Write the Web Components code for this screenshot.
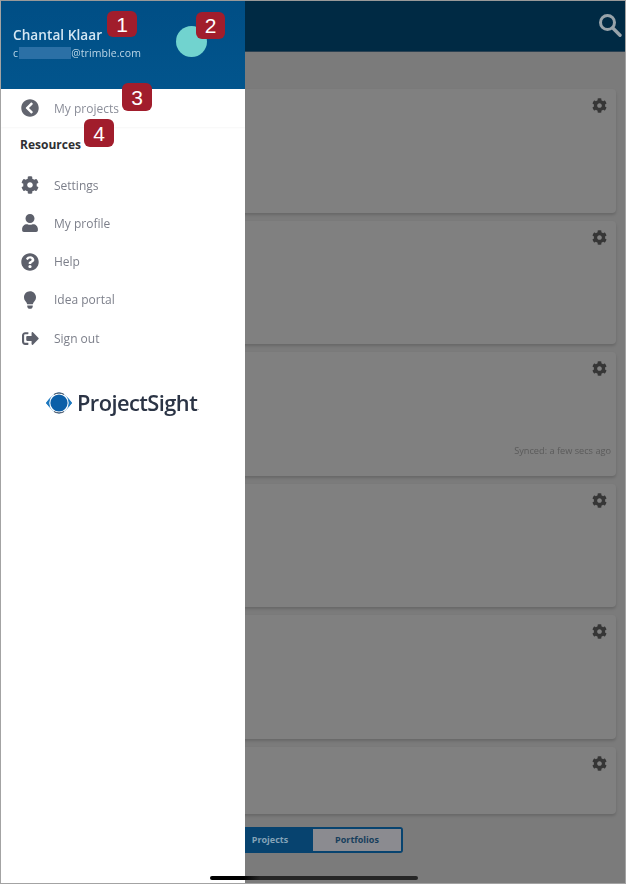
<!DOCTYPE html>
<html lang="en"><head><meta charset="utf-8"><title>ProjectSight menu</title>
<style>
html,body{margin:0;padding:0;background:#7b7b7b}
body{font-family:"Open Sans","Liberation Sans",sans-serif}
</style></head><body>
<app-shell>
  <top-bar slot="page"></top-bar>
  <project-list slot="page">
    <project-card></project-card>
    <project-card></project-card>
    <project-card synced="Synced: a few secs ago"></project-card>
    <project-card></project-card>
    <project-card></project-card>
    <project-card short></project-card>
  </project-list>
  <segment-toggle slot="page"></segment-toggle>

  <nav-drawer slot="overlay">
    <drawer-header name="Chantal Klaar" prefix="c" domain="@trimble.com"></drawer-header>
    <back-row label="My projects"></back-row>
    <section-title>Resources</section-title>
    <nav-item icon="cog">Settings</nav-item>
    <nav-item icon="user">My profile</nav-item>
    <nav-item icon="help">Help</nav-item>
    <nav-item icon="bulb">Idea portal</nav-item>
    <nav-item icon="signout">Sign out</nav-item>
    <brand-logo></brand-logo>
  </nav-drawer>

  <note-badge slot="overlay" n="1" style="left:106px;top:10px;width:30px;height:26px"></note-badge>
  <note-badge slot="overlay" n="2" style="left:195px;top:11px;width:29px;height:27px"></note-badge>
  <note-badge slot="overlay" n="3" style="left:121px;top:82px;width:30px;height:28px"></note-badge>
  <note-badge slot="overlay" n="4" style="left:83px;top:118px;width:30px;height:28px"></note-badge>
  <home-indicator slot="overlay"></home-indicator>
</app-shell>

<script>
const ICONS={
cog:['0 0 512 512','M487.4 315.7l-42.6-24.6c4.3-23.2 4.3-47 0-70.2l42.6-24.6c4.9-2.8 7.1-8.6 5.5-14-11.1-35.6-30-67.8-54.7-94.6-3.8-4.1-10-5.1-14.8-2.3L380.8 110c-17.9-15.4-38.5-27.3-60.8-35.1V25.8c0-5.6-3.9-10.5-9.4-11.7-36.7-8.2-74.3-7.8-109.2 0-5.5 1.2-9.4 6.1-9.4 11.7V75c-22.2 7.9-42.8 19.8-60.8 35.1L88.7 85.5c-4.9-2.8-11-1.9-14.8 2.3-24.7 26.7-43.6 58.9-54.7 94.6-1.7 5.4.6 11.2 5.5 14L67.3 221c-4.3 23.2-4.3 47 0 70.2l-42.6 24.6c-4.9 2.8-7.1 8.6-5.5 14 11.1 35.6 30 67.8 54.7 94.6 3.8 4.1 10 5.1 14.8 2.3l42.6-24.6c17.9 15.4 38.5 27.3 60.8 35.1v49.2c0 5.6 3.9 10.5 9.4 11.7 36.7 8.2 74.3 7.8 109.2 0 5.5-1.2 9.4-6.1 9.4-11.7v-49.2c22.2-7.9 42.8-19.8 60.8-35.1l42.6 24.6c4.9 2.8 11 1.9 14.8-2.3 24.7-26.7 43.6-58.9 54.7-94.6 1.5-5.5-.7-11.3-5.6-14.1zM256 336c-44.1 0-80-35.9-80-80s35.9-80 80-80 80 35.9 80 80-35.9 80-80 80z'],
user:['0 0 448 512','M224 256c70.7 0 128-57.3 128-128S294.7 0 224 0 96 57.3 96 128s57.3 128 128 128zm89.6 32h-16.7c-22.2 10.2-46.9 16-72.9 16s-50.6-5.8-72.9-16h-16.7C60.2 288 0 348.2 0 422.4V464c0 26.5 21.5 48 48 48h352c26.5 0 48-21.5 48-48v-41.6c0-74.2-60.2-134.4-134.4-134.4z'],
help:['0 0 512 512','M504 256c0 136.997-111.043 248-248 248S8 392.997 8 256C8 119.083 119.043 8 256 8s248 111.083 248 248zM262.655 90c-54.497 0-89.255 22.957-116.549 63.758-3.536 5.286-2.353 12.415 2.715 16.258l34.699 26.31c5.205 3.947 12.621 3.008 16.665-2.122 17.864-22.658 30.113-35.797 57.303-35.797 20.429 0 45.698 13.148 45.698 32.958 0 14.976-12.363 22.667-32.534 33.976C247.128 238.528 216 254.941 216 296v4c0 6.627 5.373 12 12 12h56c6.627 0 12-5.373 12-12v-1.333c0-28.462 83.186-29.647 83.186-106.667 0-58.002-60.165-102-116.531-102zM256 338c-25.365 0-46 20.635-46 46 0 25.364 20.635 46 46 46s46-20.636 46-46c0-25.365-20.635-46-46-46z'],
back:['0 0 512 512','M256 504C119 504 8 393 8 256S119 8 256 8s248 111 248 248-111 248-248 248zM142.1 273l135.5 135.5c9.4 9.4 24.6 9.4 33.9 0l17-17c9.4-9.4 9.4-24.6 0-33.9L226.9 256l101.6-101.6c9.4-9.4 9.4-24.6 0-33.9l-17-17c-9.4-9.4-24.6-9.4-33.9 0L142.1 239c-9.4 9.4-9.4 24.6 0 34z'],
bulb:['0 0 352 512','M96.06 454.35c.01 6.29 1.87 12.45 5.36 17.69l17.09 25.69a31.99 31.99 0 0 0 26.64 14.28h61.71a31.99 31.99 0 0 0 26.64-14.28l17.09-25.69a31.989 31.989 0 0 0 5.36-17.69l.04-38.35H96.01l.05 38.35zM0 176c0 44.37 16.45 84.85 43.56 115.78 16.52 18.85 42.36 58.23 52.21 91.45.04.26.07.52.11.78h160.24c.04-.26.07-.51.11-.78 9.85-33.22 35.69-72.6 52.21-91.45C335.55 260.85 352 220.37 352 176 352 78.61 272.91-.3 175.45 0 73.44.31 0 82.97 0 176z'],
signout:['0 0 512 512','M497 273L329 441c-15 15-41 4.5-41-17v-96H152c-13.3 0-24-10.7-24-24v-96c0-13.3 10.7-24 24-24h136V88c0-21.4 25.9-32 41-17l168 168c9.3 9.4 9.3 24.6 0 34zM192 436v-40c0-6.6-5.4-12-12-12H96c-17.7 0-32-14.3-32-32V160c0-17.7 14.3-32 32-32h84c6.6 0 12-5.4 12-12V76c0-6.6-5.4-12-12-12H96c-53 0-96 43-96 96v192c0 53 43 96 96 96h84c6.6 0 12-5.4 12-12z']
};
function def(name,css,html){
  customElements.define(name,class extends HTMLElement{
    constructor(){super();this.attachShadow({mode:'open'});}
    connectedCallback(){
      if(this._r)return;this._r=1;
      const h=typeof html==='function'?html(this):html;
      this.shadowRoot.innerHTML='<style>'+css+'</style>'+h;
    }
  });
}
def('fa-icon',':host{display:inline-flex;align-items:center;justify-content:center;color:inherit}svg{display:block;fill:currentColor;width:var(--w,18px);height:var(--h,18px)}',
  e=>{const i=ICONS[e.getAttribute('name')];return `<svg viewBox="${i[0]}"><path d="${i[1]}"/></svg>`;});

def('app-shell',`:host{display:block;position:relative;width:626px;height:884px;box-sizing:border-box;border:1px solid #a3a3a3;border-top-color:#999;background:#7b7b7b;overflow:hidden}
 .page{display:flex;flex-direction:column;height:100%;filter:blur(.3px)}`,
 `<div class="page"><slot name="page"></slot></div><slot name="overlay"></slot>`);

def('top-bar',`:host{display:flex;align-items:center;justify-content:flex-end;height:51px;flex:none;background:#002a44;border-bottom:1px solid #2b4152;box-sizing:border-box;padding-right:3px}
 svg{display:block;width:24px;height:26px;fill:none;stroke:#98a3aa;stroke-width:3;margin-top:-3px}`,
 `<svg viewBox="0 0 24 26"><circle cx="9.5" cy="10.5" r="7"/><path d="M14.8 16 22 23.2" stroke-linecap="round" stroke-width="3.4"/></svg>`);

def('project-list',`:host{display:flex;flex-direction:column;gap:8px;padding:37px 9px 0 0}`,`<slot></slot>`);

def('project-card',`:host{display:flex;flex-direction:column;justify-content:space-between;height:123.6px;box-sizing:border-box;background:#808080;border-radius:0 4px 4px 0;box-shadow:0 2px 3px rgba(0,0,0,.16);padding:9px 5px 19px 0;color:#3a3a3a}
 :host([short]){height:67px}
 fa-icon{align-self:flex-end;--w:15px;--h:15px;margin-right:4px;color:#363636}
 .s{align-self:flex-end;font-size:9.2px;line-height:12px;color:#5a5a5a;white-space:nowrap}`,
 e=>`<fa-icon name="cog"></fa-icon>${e.hasAttribute('synced')?`<span class="s">${e.getAttribute('synced')}</span>`:''}`);

def('segment-toggle',`:host{display:flex;align-self:center;margin:13px 0 0;height:26px;box-sizing:border-box;border:2px solid #07436f;border-radius:3px;font-size:9px;font-weight:700;line-height:22px;text-align:center}
 span{width:88px;display:block}
 .on{background:#07436f;color:#85a3b8;text-indent:2px}
 .off{background:#8b8b90;color:#173e5c}`,
 `<span class="on">Projects</span><span class="off">Portfolios</span>`);

def('nav-drawer',`:host{position:absolute;left:0;top:0;bottom:0;width:244px;background:#fff;display:flex;flex-direction:column;color:#6a6e7c}`,`<slot></slot>`);

def('drawer-header',`:host{display:flex;align-items:flex-start;justify-content:space-between;height:88px;flex:none;box-sizing:border-box;background:linear-gradient(#004e85,#02558d);padding:26px 37px 0 12px;color:#d3e6f2}
 .n{font-size:13.6px;line-height:16px;font-weight:600;letter-spacing:.05px;filter:blur(.25px)}
 .m{display:flex;font-size:10.5px;line-height:14px;margin-top:3px;color:#bcd6e7;letter-spacing:.1px;filter:blur(.25px)}
 .r{width:52px;height:12px;margin:1px 0 0 1px;background:#2b70a6}
 .a{width:31px;height:31px;border-radius:50%;background:#71d3cf;margin-top:-1px;margin-right:1px}`,
 e=>`<div><div class="n">${e.getAttribute('name')}</div><div class="m"><span>${e.getAttribute('prefix')}</span><span class="r"></span><span>${e.getAttribute('domain')}</span></div></div><div class="a"></div>`);

def('back-row',`:host{display:flex;align-items:center;height:38px;flex:none;box-sizing:border-box;padding-left:20px;font-size:12px;color:#8b8e99;box-shadow:0 1px 2px rgba(0,0,0,.035)}
 fa-icon{--w:18px;--h:18px;color:#62656f;width:18px;margin-right:15px}
 span{filter:blur(.3px)}`,
 e=>`<fa-icon name="back"></fa-icon><span>${e.getAttribute('label')}</span>`);

def('section-title',`:host{display:block;height:39px;flex:none;box-sizing:border-box;padding:9px 0 0 19px;font-size:12px;line-height:17px;font-weight:700;color:#2f2f33}`,`<slot></slot>`);

def('nav-item',`:host{display:flex;align-items:center;height:38.25px;flex:none;padding-left:20px;font-size:12px;color:#7c7f8a}
 .i{width:18px;display:flex;justify-content:center;margin-right:15px;color:#5d606b}
 .l{filter:blur(.3px)}
 fa-icon{--w:18px;--h:18px}
 fa-icon.user{--w:16px;--h:18px}
 fa-icon.bulb{--w:12px;--h:18px}
 fa-icon.signout{--w:17px;--h:17px}`,
 e=>{const n=e.getAttribute('icon');return `<span class="i"><fa-icon class="${n}" name="${n}"></fa-icon></span><span class="l"><slot></slot></span>`;});

def('brand-logo',`:host{display:flex;align-items:center;justify-content:flex-start;flex:none;margin:30px 0 0 45px;height:32px;color:#2b3445;filter:blur(.25px)}
 svg{display:block;width:26px;height:22px;margin-right:5px;flex:none}
 .t{font-family:"Open Sans","Liberation Sans",sans-serif;font-size:21.8px;font-weight:600;letter-spacing:-.55px;line-height:32px;white-space:nowrap}
 .d{font-size:8px;color:#8f96a3;align-self:flex-end;line-height:24px}`,
 `<svg viewBox="0 0 26 22"><path d="M0 11C3 7 8 .6 13 .6S23 7 26 11C23 15 18 21.4 13 21.4S3 15 0 11Z" fill="#1c78bf"/><circle cx="13" cy="11" r="10" fill="#fff"/><path d="M0 11 5.2 5.4C2.6 8.5 2.6 13.5 5.2 16.6ZM26 11 20.8 5.4C23.4 8.5 23.4 13.5 20.8 16.6Z" fill="#1c78bf"/><path d="M8 2.4C11 .6 15 .6 18 2.4M8 19.6C11 21.4 15 21.4 18 19.6" fill="none" stroke="#2b3445" stroke-width=".9"/><circle cx="13" cy="11" r="8.6" fill="#0b5fa8"/></svg><span class="t">ProjectSight</span><span class="d">.</span>`);

def('note-badge',`:host{position:absolute;display:flex;align-items:center;justify-content:center;box-sizing:border-box;background:#a11d2c;border-radius:6px;color:#fff;font-family:"Liberation Sans",Arial,sans-serif;font-size:21px;line-height:1}`,
 e=>`${e.getAttribute('n')}`);

def('home-indicator',`:host{position:absolute;left:209px;top:875px;width:208px;height:4px;border-radius:2px;background:linear-gradient(90deg,#000 0,#000 16%,#262626 24%,#262626 100%)}`,``);
</script>
</body></html>
